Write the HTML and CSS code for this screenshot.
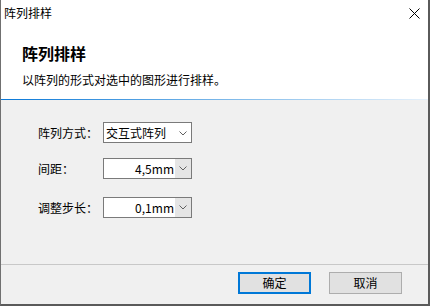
FILE: index.html
```html
<!DOCTYPE html>
<html lang="zh-CN">
    <head>
        <meta charset="UTF-8">
        <title>阵列排样</title>
        <link rel="stylesheet" href="styles.css">
    </head>
    <body>
        <div class="window">
            <div class="titlebar">
                <span class="title">阵列排样</span>
                <span class="close">
                    <svg width="11" height="11" viewBox="0 0 11 11">
                        <path d="M0.5 0.5 L10.5 10.5 M10.5 0.5 L0.5 10.5" stroke="#000" stroke-width="1" fill="none"/>
                    </svg>
                </span>
            </div>
            <div class="header">
                <h1>阵列排样</h1>
                <p>以阵列的形式对选中的图形进行排样。</p>
            </div>
            <div class="header-line"></div>
            <div class="content">
                <div class="row row-first">
                    <label>阵列方式：</label>
                    <div class="select">
                        <span class="value">交互式阵列</span>
                        <span class="chev">
                            <svg width="8" height="5" viewBox="0 0 8 5"><path d="M0.5 0.5 L4 4 L7.5 0.5" stroke="#606060" fill="none"/></svg>
                        </span>
                    </div>
                </div>
                <div class="row row-second">
                    <label>间距：</label>
                    <div class="combo">
                        <span class="num">4,5mm</span>
                        <span class="drop">
                            <svg width="8" height="5" viewBox="0 0 8 5"><path d="M0.5 0.5 L4 4 L7.5 0.5" stroke="#606060" fill="none"/></svg>
                        </span>
                    </div>
                </div>
                <div class="row row-third">
                    <label>调整步长：</label>
                    <div class="combo">
                        <span class="num">0,1mm</span>
                        <span class="drop">
                            <svg width="8" height="5" viewBox="0 0 8 5"><path d="M0.5 0.5 L4 4 L7.5 0.5" stroke="#606060" fill="none"/></svg>
                        </span>
                    </div>
                </div>
            </div>
            <div class="separator"></div>
            <div class="footer">
                <button class="btn btn-default">确定</button>
                <button class="btn">取消</button>
            </div>
        </div>
    </body>
</html>
```

FILE: styles.css
```css
* { box-sizing: border-box; }
body { margin: 0; font-family: "Noto Sans CJK SC", "Liberation Sans", sans-serif; font-size: 12px; color: #000; }
.window { width: 430px; height: 306px; border-left: 1px solid #707070; border-right: 2px solid #5a5a5a; border-bottom: 2px solid #5a5a5a; background: #f0f0f0; display: flex; flex-direction: column; }
.titlebar { height: 30px; background: #fff; display: flex; justify-content: space-between; padding: 5px 0 0 3px; }
.title { line-height: 16px; }
.close { width: 11px; height: 11px; margin: 3px 8px 0 0; }
.close svg { display: block; }
.header { height: 69px; background: #fff; padding: 13px 0 0 21px; }
.header h1 { margin: 0; font-size: 16px; font-weight: bold; line-height: 20px; }
.header p { margin: 9px 0 0 0; line-height: 16px; }
.header-line { height: 1px; background: linear-gradient(to right, #0a78d7, #8cc1ec 60%, #e6f1fb); }
.content { height: 164px; padding: 22px 0 0 37px; }
.row { display: flex; align-items: center; height: 21px; }
.row-second { margin-top: 15px; }
.row-third { margin-top: 18px; }
.row label { width: 65px; line-height: 16px; }
.select, .combo { width: 89px; height: 21px; border: 1px solid #7a7a7a; background: #fff; display: flex; align-items: center; }
.select .value { flex: 1; padding-left: 2px; line-height: 16px; }
.chev { width: 16px; display: flex; justify-content: center; padding-top: 1px; }
.combo .num { flex: 1; text-align: right; padding-right: 1px; line-height: 16px; }
.drop { width: 16px; height: 19px; background: #e5e5e5; display: flex; align-items: center; justify-content: center; }
.chev svg, .drop svg { display: block; }
.separator { height: 1px; background: #c8c8c8; }
.footer { height: 39px; display: flex; justify-content: flex-end; gap: 18px; padding: 7px 26px 0 0; }
.btn { width: 73px; height: 22px; margin: 0; padding: 0; font-family: inherit; font-size: 12px; line-height: 16px; color: #000; background: #e1e1e1; border: 1px solid #adadad; }
.btn-default { border: 2px solid #0078d7; }
```
